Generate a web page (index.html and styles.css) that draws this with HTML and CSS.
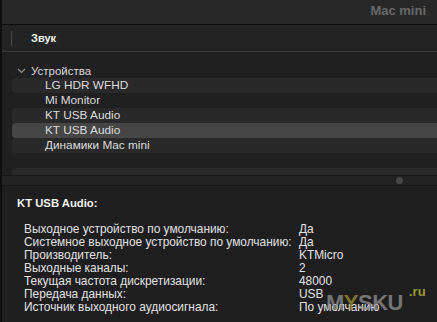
FILE: index.html
```html
<!DOCTYPE html>
<html lang="ru">
<head>
  <meta charset="UTF-8">
  <title>Информация о системе</title>
  <link rel="stylesheet" href="styles.css">
</head>
<body>

  <div class="window">
    <div class="titlebar">Mac mini</div>

    <div class="toolbar">
      <span class="divider"></span>
      <span class="section-title">Звук</span>
    </div>

    <div class="list">
      <div class="group">
        <svg class="chevron" width="9" height="6" viewBox="0 0 9 6">
          <path d="M1 1 L4.5 4.5 L8 1" fill="none" stroke="#8e8e8e" stroke-width="1.2"/>
        </svg>
        Устройства
      </div>
      <div class="row stripe">LG HDR WFHD</div>
      <div class="row">Mi Monitor</div>
      <div class="row stripe">KT USB Audio</div>
      <div class="row selected">KT USB Audio</div>
      <div class="row stripe">Динамики Mac mini</div>
      <div class="row"></div>
      <div class="row stripe short"></div>
    </div>

    <div class="scrollbar">
      <span class="knob"></span>
    </div>

    <div class="info">
      <div class="info-title">KT USB Audio:</div>
      <dl class="props">
        <dt>Выходное устройство по умолчанию:</dt><dd>Да</dd>
        <dt>Системное выходное устройство по умолчанию:</dt><dd>Да</dd>
        <dt>Производитель:</dt><dd>KTMicro</dd>
        <dt>Выходные каналы:</dt><dd>2</dd>
        <dt>Текущая частота дискретизации:</dt><dd>48000</dd>
        <dt>Передача данных:</dt><dd>USB</dd>
        <dt>Источник выходного аудиосигнала:</dt><dd>По умолчанию</dd>
      </dl>
      <div class="watermark"><span class="wm-y-wrap">M<span class="wm-y">Y</span>SKU</span><span class="wm-ru">.ru</span></div>
    </div>
  </div>

</body>
</html>
```

FILE: styles.css
```css
body {
  margin: 0;
  font-family: "Liberation Sans", Arial, sans-serif;
  background-color: #1e1e1e;
  color: #dedede;
}

.window {
  width: 437px;
  height: 322px;
  box-sizing: border-box;
  border-left: 2px solid #0f0f0f;
  background: #1e1e1e;
  overflow: hidden;
  position: relative;
}

.titlebar {
  height: 24px;
  line-height: 22px;
  background: #282828;
  border-bottom: 1px solid #0c0c0c;
  text-align: right;
  padding-right: 11px;
  font-size: 13px;
  font-weight: bold;
  color: #686868;
}

.toolbar {
  height: 26px;
  background: #232323;
  border-bottom: 1px solid #3a3a3a;
  display: flex;
  align-items: center;
}

.divider {
  width: 1px;
  height: 15px;
  background: #474747;
  margin-left: 9px;
}

.section-title {
  margin-left: 19px;
  font-size: 11px;
  font-weight: bold;
  color: #f2f2f2;
}

.list {
  height: 123px;
  background: #202020;
  padding-top: 11px;
  box-sizing: border-box;
  overflow: hidden;
}

.group {
  height: 15px;
  display: flex;
  align-items: center;
  font-size: 11.5px;
  color: #d8d8d8;
  padding-left: 15px;
}

.chevron {
  margin-right: 5px;
}

.row {
  height: 15px;
  line-height: 15px;
  margin-left: 10px;
  padding-left: 33px;
  font-size: 11.8px;
  color: #dcdcdc;
  border-radius: 4px 0 0 4px;
}

.stripe {
  background: #292929;
}

.selected {
  background: #464646;
}

.short {
  height: 8px;
}

.scrollbar {
  height: 9px;
  background: #232323;
  border-top: 1px solid #161616;
  border-bottom: 1px solid #161616;
  position: relative;
}

.knob {
  position: absolute;
  left: 394px;
  top: 1px;
  width: 7px;
  height: 7px;
  border-radius: 50%;
  background: #474747;
}

.info {
  padding: 11px 0 0 15px;
  position: relative;
}

.info-title {
  font-size: 11.3px;
  font-weight: bold;
  color: #f4f4f4;
  line-height: 13px;
}

.props {
  margin: 13px 0 0 7px;
  display: grid;
  grid-template-columns: 275px auto;
  font-size: 11.9px;
  line-height: 13px;
  color: #e2e2e2;
}

.props dt,
.props dd {
  margin: 0;
}

.watermark {
  position: absolute;
  left: 324px;
  top: 104px;
  font-size: 22px;
  font-weight: bold;
  color: rgba(150, 150, 150, 0.72);
  letter-spacing: -0.5px;
  line-height: 26px;
}

.wm-y {
  color: rgba(150, 140, 50, 0.8);
}

.wm-ru {
  position: absolute;
  left: 83px;
  top: -6px;
  font-size: 13px;
  color: #9d9630;
  letter-spacing: 0;
  line-height: 16px;
}
```
